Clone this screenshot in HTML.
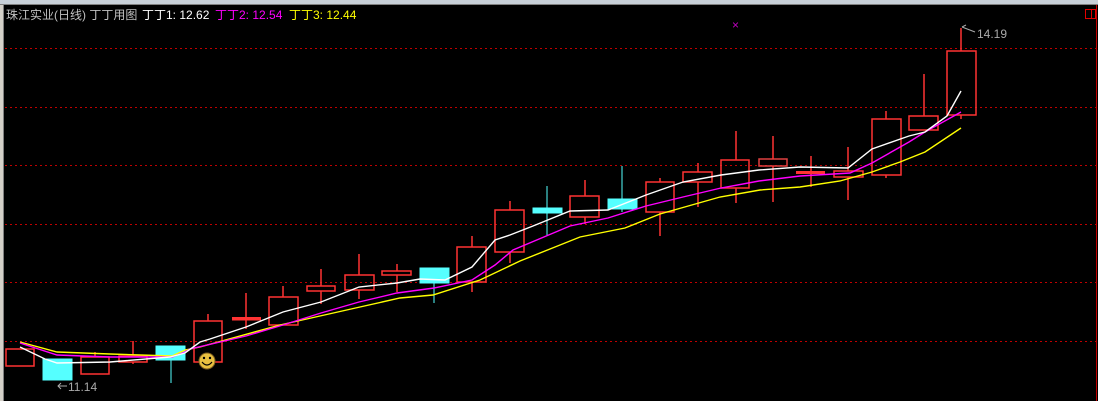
<!DOCTYPE html>
<html><head><meta charset="utf-8"><style>
html,body{margin:0;padding:0;background:#000;width:1098px;height:401px;overflow:hidden}
svg{display:block}
text{font-family:"Liberation Sans","Noto Sans CJK SC",sans-serif;font-size:12px}
</style></head><body>
<svg width="1098" height="401" viewBox="0 0 1098 401" xmlns="http://www.w3.org/2000/svg">
<rect width="1098" height="401" fill="#000"/>
<rect x="0" y="0" width="3" height="401" fill="#d4d0c8"/>
<rect x="3" y="0" width="1" height="401" fill="#808080"/>
<rect x="0" y="0" width="1098" height="4" fill="#c8d0d8"/>
<rect x="0" y="4" width="1098" height="1" fill="#808080"/>
<rect x="1096" y="5" width="1" height="396" fill="#c00000"/>
<rect x="1085.5" y="9.5" width="10" height="9" fill="none" stroke="#e00000"/>
<line x1="1091.5" y1="9" x2="1091.5" y2="19" stroke="#e00000"/>
<g fill="none" stroke="#c00000" stroke-dasharray="2 3" stroke-width="1">
<path d="M5 48H1096M5 107H1096M5 165H1096M5 224H1096M5 282H1096M5 341H1096" shape-rendering="crispEdges" transform="translate(0,0.5)"/>
</g>
<text x="6" y="19" fill="#c0c0c0">珠江实业(日线) 丁丁用图</text>
<text x="142" y="19" fill="#fff">丁丁1: 12.62</text>
<text x="215" y="19" fill="#ff00ff">丁丁2: 12.54</text>
<text x="289" y="19" fill="#ffff00">丁丁3: 12.44</text>
<text x="732" y="29" fill="#c000c0" font-size="8">×</text>
<g stroke="#ff3333" stroke-width="1.5" fill="none">
<rect x="6" y="349" width="28" height="17"/>
<rect x="81" y="357" width="28" height="17"/><line x1="95" y1="352" x2="95" y2="357"/>
<rect x="119" y="356" width="28" height="6"/><line x1="133" y1="341" x2="133" y2="356"/><line x1="133" y1="362" x2="133" y2="364"/>
<rect x="194" y="321" width="28" height="41"/><line x1="208" y1="314" x2="208" y2="321"/>
<line x1="246" y1="293" x2="246" y2="329"/>
<rect x="269" y="297" width="29" height="28"/><line x1="283" y1="286" x2="283" y2="297"/>
<rect x="307" y="286" width="28" height="5"/><line x1="321" y1="269" x2="321" y2="286"/><line x1="321" y1="291" x2="321" y2="304"/>
<rect x="345" y="275" width="29" height="15"/><line x1="359" y1="254" x2="359" y2="275"/><line x1="359" y1="290" x2="359" y2="299"/>
<rect x="382" y="271" width="29" height="4"/><line x1="397" y1="264" x2="397" y2="271"/><line x1="397" y1="275" x2="397" y2="292"/>
<rect x="457" y="247" width="29" height="35"/><line x1="472" y1="236" x2="472" y2="247"/><line x1="472" y1="282" x2="472" y2="292"/>
<rect x="495" y="210" width="29" height="42"/><line x1="510" y1="201" x2="510" y2="210"/><line x1="510" y1="252" x2="510" y2="263"/>
<rect x="570" y="196" width="29" height="21"/><line x1="585" y1="180" x2="585" y2="196"/><line x1="585" y1="217" x2="585" y2="224"/>
<rect x="646" y="182" width="28" height="30"/><line x1="660" y1="178" x2="660" y2="182"/><line x1="660" y1="212" x2="660" y2="236"/>
<rect x="683" y="172" width="29" height="10"/><line x1="698" y1="163" x2="698" y2="172"/><line x1="698" y1="182" x2="698" y2="207"/>
<rect x="721" y="160" width="28" height="28"/><line x1="736" y1="131" x2="736" y2="160"/><line x1="736" y1="188" x2="736" y2="203"/>
<rect x="759" y="159" width="28" height="7" stroke="#e04040"/><line x1="773" y1="136" x2="773" y2="159"/><line x1="773" y1="166" x2="773" y2="202"/>
<line x1="811" y1="156" x2="811" y2="187"/>
<rect x="834" y="171" width="29" height="6"/><line x1="848" y1="147" x2="848" y2="171"/><line x1="848" y1="177" x2="848" y2="200"/>
<rect x="872" y="119" width="29" height="56"/><line x1="886" y1="111" x2="886" y2="119"/><line x1="886" y1="175" x2="886" y2="178"/>
<rect x="909" y="116" width="29" height="14"/><line x1="924" y1="74" x2="924" y2="116"/>
<rect x="947" y="51" width="29" height="64"/><line x1="961" y1="28" x2="961" y2="51"/><line x1="961" y1="115" x2="961" y2="119"/>
</g>
<rect x="232" y="317" width="29" height="3.5" fill="#ff3333"/>
<rect x="796" y="171" width="29" height="3" fill="#ff3333"/>
<g fill="#55ffff" stroke="#55ffff">
<rect x="43" y="359" width="29" height="21"/>
<rect x="156" y="346" width="29" height="14"/><line x1="171" y1="360" x2="171" y2="383"/>
<rect x="420" y="268" width="29" height="15"/><line x1="434" y1="283" x2="434" y2="303"/>
<rect x="533" y="208" width="29" height="5"/><line x1="547" y1="186" x2="547" y2="236"/>
<rect x="608" y="199" width="29" height="10"/><line x1="622" y1="166" x2="622" y2="212"/>
</g>
<g fill="none" stroke-width="1.4">
<polyline stroke="#ffff00" points="20,342 57,352 110,354 172,356 185,350 200,347 280,325 360,307 400,298 433,295 480,280 520,261 550,249 580,237 625,228 660,214 720,197 760,190 800,187 840,181 872,172 900,162 925,152 961,128"/>
<polyline stroke="#ff00ff" points="20,343 57,355 110,357 172,357 185,352 190,349 246,336 283,325 321,313 359,302 397,293 434,288 472,280 495,265 513,250 570,226 608,218 646,206 683,197 721,188 759,181 800,176 850,173 872,163 909,142 925,132 961,112"/>
<polyline stroke="#ffffff" points="20,347 45,359 57,363 110,362 170,357 185,353 200,342 210,339 246,327 283,312 321,302 359,287 397,283 420,279 445,280 472,267 495,240 510,235 533,226 570,211 608,210 646,195 683,182 721,175 759,170 800,167 848,168 872,149 909,136 925,132 947,116 961,91"/>
</g>
<circle cx="207" cy="361" r="8" fill="#e8c040" stroke="#806020"/>
<circle cx="204" cy="358" r="1.2" fill="#000"/><circle cx="210" cy="358" r="1.2" fill="#000"/>
<path d="M202 362 Q207 368 212 362" stroke="#000" fill="none" stroke-width="1.2"/>
<path d="M67 386 H58 M61 383 L58 386 L61 389" stroke="#aaa" fill="none"/>
<text x="68" y="391" fill="#aaa">11.14</text>
<path d="M962 27 L975 32 M962 27 L966 25" stroke="#aaa" fill="none"/>
<text x="977" y="38" fill="#aaa">14.19</text>
</svg>
</body></html>
